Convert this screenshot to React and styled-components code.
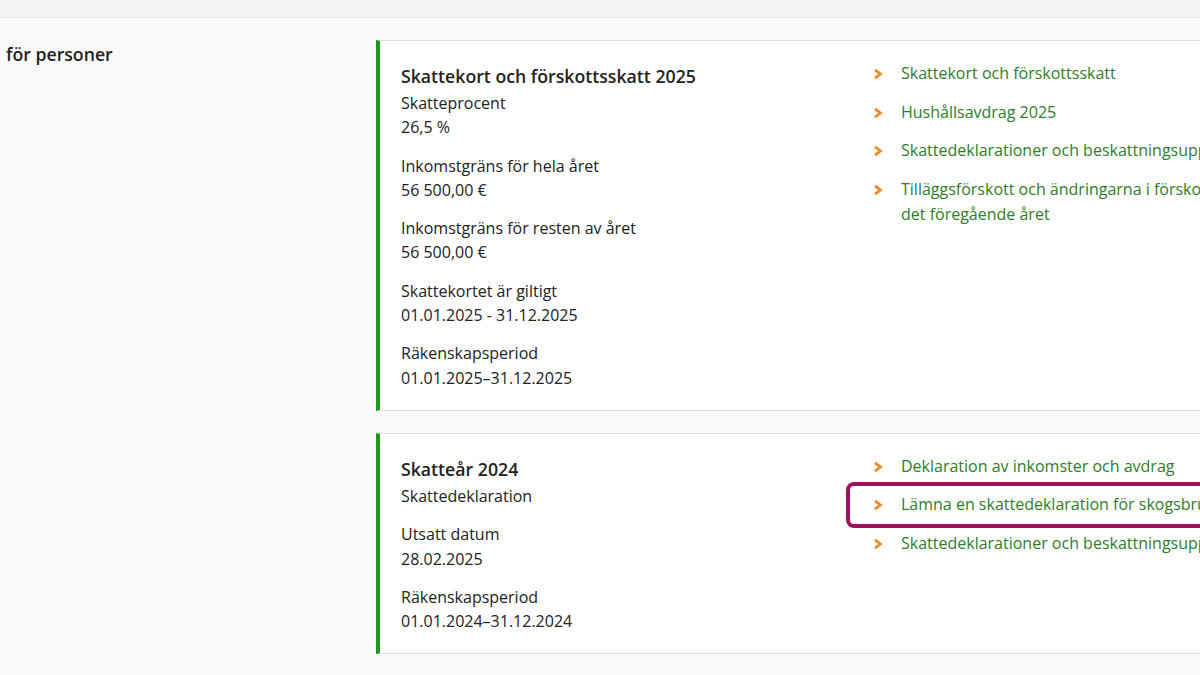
import React from "react";
import styled, { createGlobalStyle } from "styled-components";

const Global = createGlobalStyle`
  html, body {
    margin: 0;
    padding: 0;
    background: #fafafa;
    font-family: "Open Sans", "Noto Sans", sans-serif;
    color: #222;
  }
`;

const Page = styled.div`
  width: 1200px;
  height: 675px;
  overflow: hidden;
  position: relative;
`;

const TopBar = styled.div`
  height: 17px;
  background: #f3f3f3;
  border-bottom: 1px solid #e8e8e8;
`;

const Main = styled.div`
  display: grid;
  grid-template-columns: 376px 980px;
  padding-top: 22px;
`;

const SideHeading = styled.h2`
  margin: 0;
  padding: 2px 0 0 6px;
  font-size: 17.7px;
  font-weight: 600;
  line-height: 24px;
  color: #222;
`;

const Cards = styled.div`
  display: flex;
  flex-direction: column;
  gap: 22px;
`;

const Card = styled.section`
  display: grid;
  grid-template-columns: 472px 1fr;
  background: #fff;
  border-top: 1px solid #dcdcdc;
  border-bottom: 1px solid #dcdcdc;
  border-left: 4px solid #1d9a1d;
  padding: 22px 0 20px 21px;
`;

const Info = styled.div`
  display: flex;
  flex-direction: column;
`;

const Title = styled.h3`
  margin: 0 0 2px;
  font-size: 17.7px;
  font-weight: 600;
  line-height: 26px;
  color: #222;
  white-space: nowrap;
`;

const Field = styled.div`
  margin-bottom: 14px;
  font-size: 16px;
  line-height: 24.3px;
  &:last-child { margin-bottom: 0; }
`;

const Links = styled.ul`
  list-style: none;
  margin: -2px 0 0;
  padding: 0;
  display: flex;
  flex-direction: column;
  gap: 13.5px;
`;

const LinkItem = styled.li`
  position: relative;
  display: flex;
  align-items: flex-start;
  gap: 18px;
  font-size: 16px;
  line-height: 25px;
  color: #2f7d2a;
  white-space: nowrap;
`;

const LinkText = styled.span`
  white-space: ${p => (p.$wrap ? "normal" : "nowrap")};
  max-width: ${p => (p.$wrap ? "420px" : "none")};
`;

const Chevron = styled.svg`
  flex: none;
  margin-top: 7px;
`;

const Highlight = styled.div`
  position: absolute;
  left: -27px;
  right: -200px;
  top: -10px;
  bottom: -11px;
  border: 4px solid #a1105c;
  border-radius: 8px;
  pointer-events: none;
`;

const Arrow = () => (
  <Chevron width="10" height="12" viewBox="0 0 10 12">
    <polyline points="2,1.8 7.5,6 2,10.2" fill="none" stroke="#f08a24" strokeWidth="2.8" strokeLinejoin="miter" />
  </Chevron>
);

const cards = [
  {
    title: "Skattekort och förskottsskatt 2025",
    fields: [
      ["Skatteprocent", "26,5 %"],
      ["Inkomstgräns för hela året", "56 500,00 €"],
      ["Inkomstgräns för resten av året", "56 500,00 €"],
      ["Skattekortet är giltigt", "01.01.2025 - 31.12.2025"],
      ["Räkenskapsperiod", "01.01.2025–31.12.2025"]
    ],
    links: [
      { text: "Skattekort och förskottsskatt" },
      { text: "Hushållsavdrag 2025" },
      { text: "Skattedeklarationer och beskattningsuppgifter" },
      { text: "Tilläggsförskott och ändringarna i förskottsskatten för det föregående året", wrap: true }
    ]
  },
  {
    title: "Skatteår 2024",
    fields: [
      ["Skattedeklaration", null],
      ["Utsatt datum", "28.02.2025"],
      ["Räkenskapsperiod", "01.01.2024–31.12.2024"]
    ],
    links: [
      { text: "Deklaration av inkomster och avdrag" },
      { text: "Lämna en skattedeklaration för skogsbruket", marked: true },
      { text: "Skattedeklarationer och beskattningsuppgifter" }
    ]
  }
];

export default function App() {
  return (
    <Page>
      <Global />
      <TopBar />
      <Main>
        <SideHeading>för personer</SideHeading>
        <Cards>
          {cards.map(c => (
            <Card key={c.title}>
              <Info>
                <Title>{c.title}</Title>
                {c.fields.map(([label, value]) => (
                  <Field key={label}>
                    <div>{label}</div>
                    {value && <div>{value}</div>}
                  </Field>
                ))}
              </Info>
              <Links>
                {c.links.map(l => (
                  <LinkItem key={l.text}>
                    <Arrow />
                    <LinkText $wrap={l.wrap}>{l.text}</LinkText>
                    {l.marked && <Highlight />}
                  </LinkItem>
                ))}
              </Links>
            </Card>
          ))}
        </Cards>
      </Main>
    </Page>
  );
}
